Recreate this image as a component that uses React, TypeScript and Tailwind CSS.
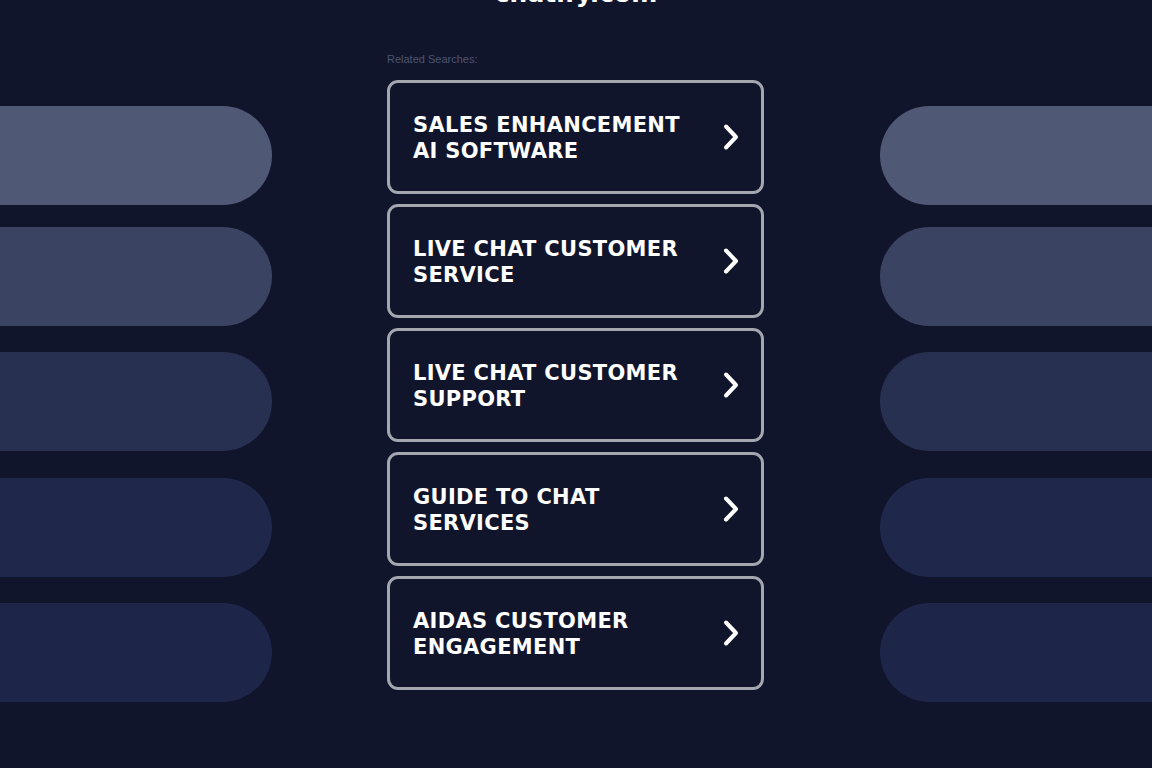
import React from "react";

const searches = [
  ["SALES ENHANCEMENT", "AI SOFTWARE"],
  ["LIVE CHAT CUSTOMER", "SERVICE"],
  ["LIVE CHAT CUSTOMER", "SUPPORT"],
  ["GUIDE TO CHAT", "SERVICES"],
  ["AIDAS CUSTOMER", "ENGAGEMENT"],
];

const pillColors = ["bg-[#4f5875]", "bg-[#3b4362]", "bg-[#283051]", "bg-[#1f284a]", "bg-[#1d2649]"];
const pillGaps = ["mt-0", "mt-[22px]", "mt-[26px]", "mt-[27px]", "mt-[26px]"];

function Chevron() {
  return (
    <svg width="18" height="28" viewBox="0 0 18 28" fill="none" className="flex-shrink-0">
      <polyline
        points="4,3.5 14,14 4,24.5"
        stroke="#ffffff"
        strokeWidth="4"
        strokeLinecap="round"
        strokeLinejoin="round"
      />
    </svg>
  );
}

function Pills({ side }: { side: "left" | "right" }) {
  return (
    <div className="w-[272px] flex-shrink-0 pt-[106px] flex flex-col">
      {pillColors.map((c, i) => (
        <div
          key={i}
          className={`${c} ${pillGaps[i]} h-[99px] ${side === "left" ? "rounded-r-[50px]" : "rounded-l-[50px]"}`}
        />
      ))}
    </div>
  );
}

export default function App() {
  return (
    <div
      className="w-[1152px] h-[768px] overflow-hidden bg-[#10152b] relative"
      style={{ fontFamily: "'DejaVu Sans', sans-serif" }}
    >
      <div className="absolute left-0 right-0 top-[-20px] text-center text-white font-bold text-[25px] leading-[28px]">
        chatify.com
      </div>
      <div className="flex">
        <Pills side="left" />
        <div className="ml-[115px] w-[377px] flex-shrink-0 pt-[52px]">
          <p
            className="text-[11px] leading-[14px] text-[#4d5472] mb-[14px]"
            style={{ fontFamily: "'Liberation Sans', Arial, sans-serif" }}
          >
            Related Searches:
          </p>
          <div className="flex flex-col gap-[10px]">
            {searches.map((s, i) => (
              <div
                key={i}
                className="h-[114px] border-[3px] border-[#a5a7af] rounded-[11px] flex items-center justify-between pl-[23px] pr-[21px]"
              >
                <div className="text-white font-bold text-[21px] leading-[26px] tracking-[0.3px] pt-[2px]">
                  <div>{s[0]}</div>
                  <div>{s[1]}</div>
                </div>
                <Chevron />
              </div>
            ))}
          </div>
        </div>
        <div className="ml-[116px]">
          <Pills side="right" />
        </div>
      </div>
    </div>
  );
}
